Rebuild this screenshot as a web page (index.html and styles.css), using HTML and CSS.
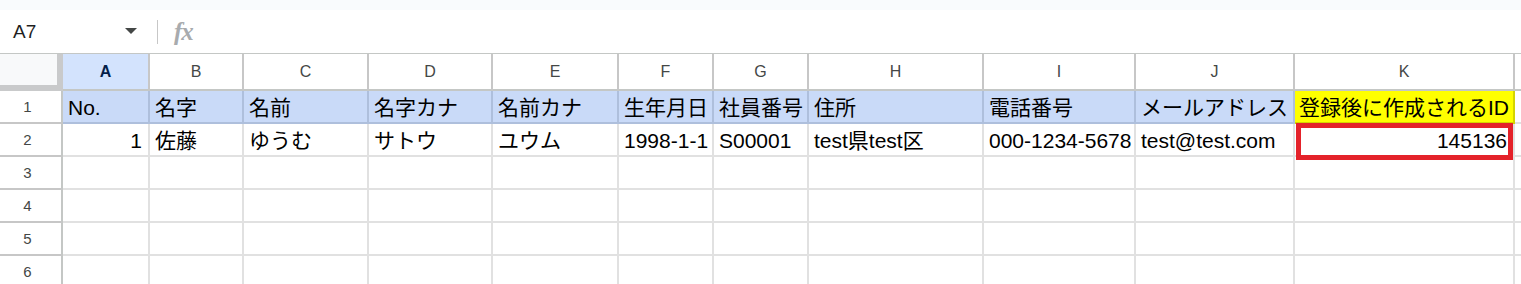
FILE: index.html
```html
<!DOCTYPE html>
<html lang="ja">
<head>
<meta charset="utf-8">
<title>Sheet</title>
<link rel="stylesheet" href="styles.css">
</head>
<body>
<div class="app">
  <div class="topband"></div>
  <div class="fbar">
    <div class="namebox"><span class="ref">A7</span><span class="caret"></span></div>
    <div class="divider"></div>
    <div class="fx">fx</div>
  </div>
  <div class="sheet">
    <div class="corner"></div>
    <div class="ch sel">A</div>
    <div class="ch">B</div>
    <div class="ch">C</div>
    <div class="ch">D</div>
    <div class="ch">E</div>
    <div class="ch">F</div>
    <div class="ch">G</div>
    <div class="ch">H</div>
    <div class="ch">I</div>
    <div class="ch">J</div>
    <div class="ch">K</div>
    <div class="ch tail"></div>

    <div class="rh">1</div>
    <div class="c hd">No.</div>
    <div class="c hd">名字</div>
    <div class="c hd">名前</div>
    <div class="c hd">名字カナ</div>
    <div class="c hd">名前カナ</div>
    <div class="c hd">生年月日</div>
    <div class="c hd">社員番号</div>
    <div class="c hd">住所</div>
    <div class="c hd">電話番号</div>
    <div class="c hd">メールアドレス</div>
    <div class="c yl">登録後に作成されるID</div>
    <div class="c"></div>

    <div class="rh">2</div>
    <div class="c num">1</div>
    <div class="c">佐藤</div>
    <div class="c">ゆうむ</div>
    <div class="c">サトウ</div>
    <div class="c">ユウム</div>
    <div class="c">1998-1-1</div>
    <div class="c">S00001</div>
    <div class="c">test県test区</div>
    <div class="c">000-1234-5678</div>
    <div class="c">test@test.com</div>
    <div class="c num marked">145136<span class="mark"></span></div>
    <div class="c"></div>

    <div class="rh">3</div>
    <div class="c"></div><div class="c"></div><div class="c"></div><div class="c"></div><div class="c"></div><div class="c"></div><div class="c"></div><div class="c"></div><div class="c"></div><div class="c"></div><div class="c"></div><div class="c"></div>

    <div class="rh">4</div>
    <div class="c"></div><div class="c"></div><div class="c"></div><div class="c"></div><div class="c"></div><div class="c"></div><div class="c"></div><div class="c"></div><div class="c"></div><div class="c"></div><div class="c"></div><div class="c"></div>

    <div class="rh">5</div>
    <div class="c"></div><div class="c"></div><div class="c"></div><div class="c"></div><div class="c"></div><div class="c"></div><div class="c"></div><div class="c"></div><div class="c"></div><div class="c"></div><div class="c"></div><div class="c"></div>

    <div class="rh">6</div>
    <div class="c"></div><div class="c"></div><div class="c"></div><div class="c"></div><div class="c"></div><div class="c"></div><div class="c"></div><div class="c"></div><div class="c"></div><div class="c"></div><div class="c"></div><div class="c"></div>
  </div>
</div>
</body>
</html>
```

FILE: styles.css
```css
* { box-sizing: border-box; }

html, body {
  margin: 0;
  padding: 0;
  background: #ffffff;
  overflow: hidden;
}

body {
  font-family: "Liberation Sans", Arial, "Noto Sans CJK JP", sans-serif;
  color: #000;
}

.app {
  width: 1521px;
  height: 284px;
  overflow: hidden;
}

.topband {
  height: 10px;
  background: #f9fbfd;
}

.fbar {
  height: 43px;
  display: flex;
  align-items: center;
  background: #ffffff;
}

.namebox {
  width: 150px;
  display: flex;
  align-items: center;
  padding-left: 13px;
}

.ref {
  flex: 1;
  font-size: 19px;
  color: #1f1f1f;
}

.caret {
  width: 0;
  height: 0;
  border-left: 6px solid transparent;
  border-right: 6px solid transparent;
  border-top: 6px solid #444746;
  margin-right: 13px;
  margin-top: -2px;
}

.divider {
  width: 1px;
  height: 24px;
  background: #c7c7c7;
  margin-left: 7px;
}

.fx {
  margin-left: 16px;
  font-family: "Liberation Serif", "DejaVu Serif", serif;
  font-style: italic;
  font-weight: bold;
  font-size: 25px;
  color: #a8abae;
  letter-spacing: -1px;
}

.sheet {
  display: grid;
  grid-template-columns: 63px 87px 94px 125px 124px 126px 95px 95px 175px 152px 159px 220px 1fr;
  grid-template-rows: 37px repeat(6, 33px);
  border-top: 1px solid #c4c7c5;
}

.corner {
  background: #f8f9fa;
  box-shadow: inset -6px -6px 0 #c9cacb;
}

.ch {
  display: flex;
  align-items: center;
  justify-content: center;
  font-size: 16px;
  color: #444746;
  background: #ffffff;
  border-right: 2px solid #c7c7c7;
  border-bottom: 2px solid #c4c7c5;
}

.ch.sel {
  background: #d3e3fd;
  color: #041e49;
  font-weight: bold;
}

.ch.tail {
  border-right: 0;
}

.rh {
  display: flex;
  align-items: center;
  justify-content: center;
  padding-right: 6px;
  font-size: 15px;
  color: #444746;
  background: #ffffff;
  border-right: 2px solid #c4c7c5;
  border-bottom: 2px solid #c7c7c7;
}

.c {
  display: flex;
  align-items: flex-end;
  padding: 0 5px 2px 5px;
  font-size: 21px;
  line-height: 24px;
  white-space: nowrap;
  overflow: visible;
  border-right: 2px solid #e1e1e1;
  border-bottom: 2px solid #e1e1e1;
}

.c.hd {
  background: #c9daf8;
  border-right-color: #aebfdc;
  border-bottom-color: #aebfdc;
}

.c.yl {
  background: #ffff00;
  border-right-color: #d4d400;
  border-bottom-color: #d4d400;
  padding-left: 4px;
}

.c.num {
  justify-content: flex-end;
  padding-right: 6px;
}

.marked {
  position: relative;
  padding-right: 7px;
}

.mark {
  position: absolute;
  left: 1px;
  top: -1px;
  width: 217px;
  height: 37px;
  border: 5px solid #e4222a;
}
```
